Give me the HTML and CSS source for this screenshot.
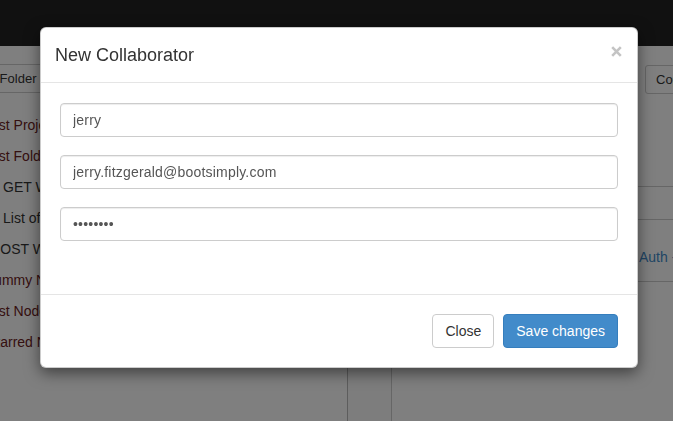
FILE: index.html
```html
<!DOCTYPE html>
<html>
<head>
<meta charset="utf-8">
<title>New Collaborator</title>
<link rel="stylesheet" href="styles.css">
</head>
<body>
<header class="navbar"></header>
<div class="page">
  <aside class="left">
    <div class="toolbar"><button class="btn-sm folder-btn">New Folder</button></div>
    <ul class="tree">
      <li class="item red">Test Project</li>
      <li class="item red">Test Folder</li>
      <li class="item dark ind1">GET Workspaces</li>
      <li class="item dark ind1">List of Nodes</li>
      <li class="item dark ind2">POST Workspace</li>
      <li class="item red">Dummy Node</li>
      <li class="item red">Test Node</li>
      <li class="item red ind3">Starred Nodes</li>
    </ul>
  </aside>
  <div class="splitter"></div>
  <main class="right">
    <div class="rtoolbar"><button class="btn-sm">Copy</button></div>
    <div class="tabbar"></div>
    <div class="row"><a class="link">Auth - Login</a></div>
  </main>
</div>
<div class="backdrop"></div>
<div class="modal">
  <div class="modal-header">
    <h4 class="modal-title">New Collaborator</h4>
    <button class="close" aria-label="Close">
      <svg width="11" height="11" viewBox="0 0 11 11"><path d="M1.2 1.2 L9.8 9.8 M9.8 1.2 L1.2 9.8" stroke="#c4c4c4" stroke-width="2.6" stroke-linecap="butt"/></svg>
    </button>
  </div>
  <div class="modal-body">
    <input class="form-control" type="text" value="jerry">
    <input class="form-control" type="email" value="jerry.fitzgerald@bootsimply.com">
    <input class="form-control" type="password" value="password">
  </div>
  <div class="modal-footer">
    <button class="btn btn-default">Close</button>
    <button class="btn btn-primary">Save changes</button>
  </div>
</div>
</body>
</html>
```

FILE: styles.css
```css
html, body {
  margin: 0;
  padding: 0;
}
body {
  font-family: "Liberation Sans", Arial, sans-serif;
  font-size: 14px;
  color: #333;
  background: #fff;
  overflow: hidden;
  height: 421px;
}
.navbar {
  height: 46px;
  background: #222;
}
.page {
  display: flex;
  height: 375px;
}
.left {
  width: 347px;
  flex: none;
  overflow: hidden;
}
.toolbar {
  padding-top: 18px;
  white-space: nowrap;
}
.btn-sm {
  font-family: "Liberation Sans", Arial, sans-serif;
  font-size: 13px;
  line-height: 17px;
  padding: 5px 10px;
  border: 1px solid #ccc;
  border-radius: 3px;
  background: #fff;
  color: #333;
  white-space: nowrap;
}
.folder-btn {
  margin-left: -41px;
}
.tree {
  list-style: none;
  margin: 17px 0 0 -16px;
  padding: 0;
}
.item {
  height: 31px;
  line-height: 31px;
  white-space: nowrap;
}
.red { color: #6b2222; }
.dark { color: #333; }
.ind1 { padding-left: 19px; }
.ind2 { padding-left: 7px; }
.ind3 { padding-left: 3px; }
.splitter {
  width: 43px;
  flex: none;
  border-left: 1px solid #bbb;
  border-right: 1px solid #ccc;
  background: #fafafa;
}
.right {
  flex: 1;
  min-width: 0;
  overflow: hidden;
}
.rtoolbar {
  padding: 19px 0 0 253px;
  white-space: nowrap;
}
.tabbar {
  margin-top: 92px;
  height: 32px;
  border-top: 1px solid #ccc;
  border-bottom: 1px solid #ccc;
}
.row {
  height: 34px;
  padding-top: 27px;
  padding-left: 247px;
  line-height: 20px;
  border-bottom: 1px solid #ccc;
  white-space: nowrap;
}
.link {
  color: #428bca;
}
.backdrop {
  position: fixed;
  inset: 0;
  background: rgba(0, 0, 0, 0.5);
}
.modal {
  position: absolute;
  top: 27px;
  left: 40px;
  width: 598px;
  box-sizing: border-box;
  background: #fff;
  border: 1px solid rgba(0, 0, 0, 0.2);
  border-radius: 6px;
  box-shadow: 0 5px 15px rgba(0, 0, 0, 0.5);
}
.modal-header {
  display: flex;
  justify-content: space-between;
  align-items: flex-start;
  padding: 15px 15px 15px 14px;
  border-bottom: 1px solid #e5e5e5;
}
.modal-title {
  margin: 0;
  font-size: 18px;
  line-height: 24px;
  font-weight: normal;
  color: #333;
}
.close {
  margin: 3px 0 0 0;
  padding: 0;
  border: 0;
  background: none;
  width: 11px;
  height: 11px;
  display: flex;
}
.modal-body {
  display: flex;
  flex-direction: column;
  gap: 18px;
  padding: 20px 19px 53px;
}
.form-control {
  display: block;
  width: 100%;
  height: 34px;
  box-sizing: border-box;
  padding: 6px 12px;
  font-family: "Liberation Sans", Arial, sans-serif;
  font-size: 14px;
  line-height: 20px;
  letter-spacing: 0.2px;
  color: #555;
  background: #fff;
  border: 1px solid #ccc;
  border-radius: 4px;
  box-shadow: inset 0 1px 1px rgba(0, 0, 0, 0.075);
  margin: 0;
}
.modal-footer {
  display: flex;
  justify-content: flex-end;
  gap: 9px;
  padding: 19px;
  border-top: 1px solid #e5e5e5;
}
.btn {
  font-family: "Liberation Sans", Arial, sans-serif;
  font-size: 14px;
  line-height: 20px;
  padding: 6px 12px;
  border: 1px solid transparent;
  border-radius: 4px;
  margin: 0;
}
.btn-default {
  background: #fff;
  border-color: #ccc;
  color: #333;
}
.btn-primary {
  background: #428bca;
  border-color: #357ebd;
  color: #fff;
}
```
